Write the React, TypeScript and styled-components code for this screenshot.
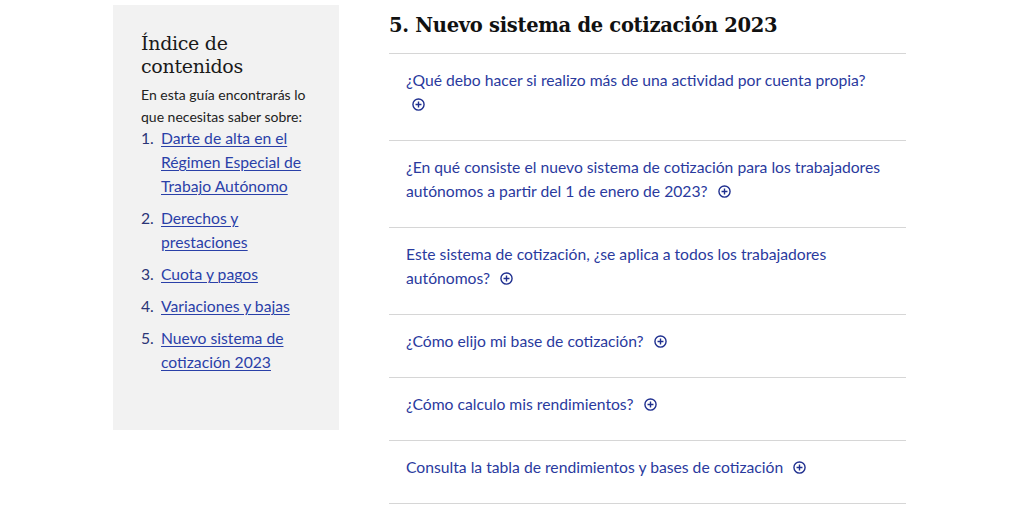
import React from 'react';
import styled, { createGlobalStyle } from 'styled-components';

const GlobalStyle = createGlobalStyle`
  html, body {
    margin: 0;
    padding: 0;
    background: #ffffff;
  }
  body {
    font-family: Lato, "Noto Sans", sans-serif;
    color: #222;
  }
`;

const Page = styled.div`
  display: flex;
  align-items: flex-start;
  gap: 50px;
  padding: 5px 0 0 113px;
`;

const Sidebar = styled.aside`
  width: 226px;
  box-sizing: border-box;
  background: #f2f2f2;
  padding: 27px 28px 56px;
`;

const SidebarTitle = styled.h2`
  margin: 0 0 6px;
  font-family: "DejaVu Serif", "Liberation Serif", serif;
  font-weight: 400;
  font-size: 19px;
  line-height: 23px;
  color: #1a1a1a;
  letter-spacing: -0.3px;
`;

const Intro = styled.p`
  margin: 0 0 -2px;
  font-size: 14px;
  line-height: 22px;
  color: #222;
`;

const TocList = styled.ol`
  margin: 0;
  padding: 0;
  list-style: none;
  display: flex;
  flex-direction: column;
  gap: 8px;
`;

const TocItem = styled.li`
  display: flex;
  font-size: 15.7px;
  line-height: 24px;
`;

const TocNumber = styled.span`
  width: 20px;
  flex: none;
  color: #2b3576;
`;

const TocLink = styled.a`
  color: #2a40a8;
  text-decoration: underline;
  text-underline-offset: 2px;
  text-decoration-thickness: 1px;
`;

const Main = styled.main`
  width: 517px;
`;

const Heading = styled.h1`
  margin: 8px 0 0;
  padding-bottom: 14px;
  font-family: "DejaVu Serif", "Liberation Serif", serif;
  font-weight: 700;
  font-size: 19.5px;
  line-height: 26px;
  color: #111;
  border-bottom: 1px solid #d6d6d6;
  letter-spacing: -0.3px;
`;

const Question = styled.div`
  padding: 14px 20px 24px 17px;
  border-bottom: 1px solid #d6d6d6;
  font-size: 15.7px;
  line-height: 24px;
  color: #2a3a9e;
`;

const PlusIcon = styled.svg`
  display: inline-block;
  width: 13px;
  height: 13px;
  margin-left: 6px;
  vertical-align: -1px;
`;

const Plus = () => (
  <PlusIcon viewBox="0 0 14 14" fill="none" stroke="#1f2f8f" strokeWidth="1.5">
    <circle cx="7" cy="7" r="6" />
    <path d="M7 3.8v6.4M3.8 7h6.4" />
  </PlusIcon>
);

const toc = [
  'Darte de alta en el Régimen Especial de Trabajo Autónomo',
  'Derechos y prestaciones',
  'Cuota y pagos',
  'Variaciones y bajas',
  'Nuevo sistema de cotización 2023',
];

const questions = [
  '¿Qué debo hacer si realizo más de una actividad por cuenta propia?',
  '¿En qué consiste el nuevo sistema de cotización para los trabajadores autónomos a partir del 1 de enero de 2023?',
  'Este sistema de cotización, ¿se aplica a todos los trabajadores autónomos?',
  '¿Cómo elijo mi base de cotización?',
  '¿Cómo calculo mis rendimientos?',
  'Consulta la tabla de rendimientos y bases de cotización',
];

export default function App() {
  return (
    <>
      <GlobalStyle />
      <Page>
        <Sidebar>
          <SidebarTitle>Índice de contenidos</SidebarTitle>
          <Intro>En esta guía encontrarás lo que necesitas saber sobre:</Intro>
          <TocList>
            {toc.map((item, i) => (
              <TocItem key={item}>
                <TocNumber>{i + 1}.</TocNumber>
                <TocLink href="#">{item}</TocLink>
              </TocItem>
            ))}
          </TocList>
        </Sidebar>
        <Main>
          <Heading>5. Nuevo sistema de cotización 2023</Heading>
          {questions.map((q) => (
            <Question key={q}>
              {q} <Plus />
            </Question>
          ))}
        </Main>
      </Page>
    </>
  );
}
